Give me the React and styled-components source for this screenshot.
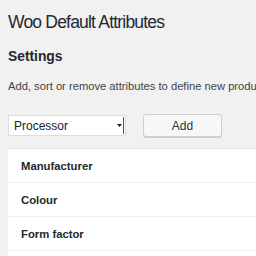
import React from 'react';
import styled, { createGlobalStyle } from 'styled-components';

const GlobalStyle = createGlobalStyle`
  html, body {
    margin: 0;
    padding: 0;
    background: #f1f1f1;
    overflow: hidden;
  }
  body {
    font-family: 'Liberation Sans', Arial, sans-serif;
    color: #23282d;
  }
`;

const Page = styled.div`
  width: 256px;
  height: 256px;
  padding: 11px 0 0 8px;
  box-sizing: border-box;
  overflow: hidden;
`;

const Title = styled.h1`
  margin: 0;
  font-size: 17.5px;
  font-weight: 400;
  letter-spacing: -0.8px;
  line-height: 22px;
  white-space: nowrap;
`;

const Heading = styled.h2`
  margin: 15px 0 0;
  font-size: 13.8px;
  font-weight: 700;
  line-height: 18px;
`;

const Intro = styled.p`
  margin: 13px 0 0;
  font-size: 11.2px;
  line-height: 14px;
  color: #444;
  white-space: nowrap;
`;

const Controls = styled.div`
  display: flex;
  align-items: center;
  gap: 17px;
  margin-top: 21px;
`;

const Select = styled.div`
  display: flex;
  align-items: center;
  justify-content: space-between;
  width: 118px;
  height: 21px;
  box-sizing: border-box;
  background: #fff;
  border: 1px solid #ddd;
  padding: 0 1px 0 5px;
  font-size: 12px;
  color: #222;
`;

const Arrow = styled.span`
  display: flex;
  align-items: center;
  justify-content: center;
  width: 8px;
  height: 17px;
  border-right: 1px solid #555;
  box-sizing: border-box;
`;

const Button = styled.button`
  width: 79px;
  height: 23px;
  background: #f7f7f7;
  border: 1px solid #d0d0d0;
  border-radius: 3px;
  box-shadow: 0 1px 0 #ccc;
  font-family: inherit;
  font-size: 12px;
  color: #333;
  padding: 0;
`;

const Table = styled.div`
  margin-top: 11px;
  background: #fff;
  border-top: 1px solid #e1e1e1;
`;

const Row = styled.div`
  height: 34px;
  display: flex;
  align-items: center;
  padding-left: 13px;
  border-bottom: 1px solid #eee;
  box-sizing: border-box;
  font-size: 11.3px;
  font-weight: 700;
  color: #23282d;
`;

const rows = ['Manufacturer', 'Colour', 'Form factor', ''];

export default function App() {
  return (
    <Page>
      <GlobalStyle />
      <Title>Woo Default Attributes</Title>
      <Heading>Settings</Heading>
      <Intro>Add, sort or remove attributes to define new products</Intro>
      <Controls>
        <Select>
          <span>Processor</span>
          <Arrow>
            <svg width="5" height="3" viewBox="0 0 5 3">
              <path d="M0 0h5L2.5 3z" fill="#222" />
            </svg>
          </Arrow>
        </Select>
        <Button>Add</Button>
      </Controls>
      <Table>
        {rows.map((r, i) => (
          <Row key={i}>{r}</Row>
        ))}
      </Table>
    </Page>
  );
}
